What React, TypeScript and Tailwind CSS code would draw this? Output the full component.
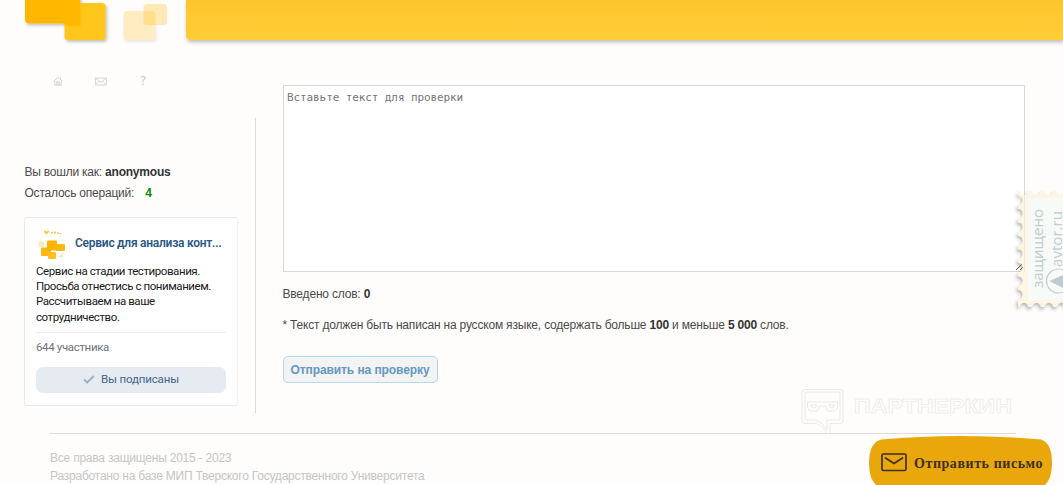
import React from 'react';

const sans = "font-['Liberation_Sans',Arial,sans-serif]";

function Logo() {
  return (
    <svg width="186" height="50" viewBox="0 0 186 50" className="block shrink-0">
      <defs>
        <filter id="soft" x="-20%" y="-20%" width="150%" height="150%">
          <feDropShadow dx="1.5" dy="2" stdDeviation="1.6" floodColor="#555" floodOpacity="0.35" />
        </filter>
        <filter id="faint" x="-20%" y="-20%" width="150%" height="150%">
          <feDropShadow dx="1" dy="2" stdDeviation="1.5" floodColor="#777" floodOpacity="0.15" />
        </filter>
        <filter id="edge" x="-20%" y="-20%" width="140%" height="140%">
          <feGaussianBlur stdDeviation=".8" />
        </filter>
      </defs>
      <rect x="25" y="-20" width="55" height="43.500" rx="4" fill="#ffb700" filter="url(#soft)" />
      <rect x="64.500" y="3" width="41" height="37" rx="3.5" fill="#ffc71f" filter="url(#soft)" />
      <rect x="66" y="4" width="14.500" height="22" fill="#ffb700" filter="url(#edge)" />
      <rect x="62" y="-5" width="18" height="28.500" rx="1.500" fill="#ffb700" />
      <rect x="123.500" y="11" width="32" height="29" rx="3.500" fill="#ffecc0" filter="url(#faint)" />
      <rect x="143.500" y="4" width="23.500" height="21" rx="3.500" fill="#ffe9b6" />
      <path d="M143.500 11H152a3.500 3.500 0 0 1 3.500 3.500V25H147a3.500 3.500 0 0 1-3.500-3.500Z" fill="#ffdf8c" />
    </svg>
  );
}

function NavIcons() {
  return (
    <div className="flex h-[12px] items-center pl-[53px]">
      <svg width="10" height="10" viewBox="0 0 10 10" fill="none" stroke="#d4d2d0" strokeWidth=".9">
        <path d="M.5 5.500 5 1l4.500 4.500M1.800 5V9.300h6.400V5M7.500 3V1M3.700 9V5.800h2.600V9M5 6v3" />
      </svg>
      <svg width="12" height="9" viewBox="0 0 12 9" fill="none" stroke="#dad8d6" strokeWidth="1" className="ml-[32px]">
        <path d="M.5 1h11v7H.5zM.8 1.200 6 5.200l5.200-4M.8 7.800 4.300 4M11.200 7.800 7.700 4" />
      </svg>
      <span className="-mt-[1px] ml-[33px] font-['DejaVu_Sans',sans-serif] text-[12px] leading-[12px] tracking-normal text-[#d0cecc]">?</span>
    </div>
  );
}

function GroupAvatar() {
  return (
    <svg width="30" height="30" viewBox="0 0 30 30" className="block shrink-0">
      <circle cx="16" cy="15" r="14" fill="#fffefa" />
      <path d="M7.500 2.500 9 1.500l1.500 1 1.500-1 1.500 1-3 3ZM15 3h2v1.500h-2zM18 2.500h2V4.500h-2zM21.500 3h1v2h-1zM23.500 4h2v1h-2z" fill="#fbc545" />
      <rect x="2.500" y="12.500" width="5.500" height="5.500" rx="1" fill="#fbe9c0" />
      <rect x="20" y="15" width="9" height="7" rx="1" fill="#fdb913" />
      <rect x="5" y="18.500" width="10" height="8.500" rx="1" fill="#fdb913" />
      <rect x="11" y="11.500" width="10" height="10" rx="1" fill="#ffb400" />
      <rect x="12" y="23" width="8" height="7" rx="1" fill="#ffc020" />
      <path d="m22 28 6-4-2 4Z" fill="#fbe3ad" />
    </svg>
  );
}

const leftHoles = [14, 27.500, 41, 54.500, 68, 81.500, 95, 108.500];
const rowHoles = [11, 23.500, 36, 48.500];

function Stamp() {
  return (
    <svg width="50" height="134" viewBox="0 0 50 134" className="absolute left-[1013px] top-[186px]">
      <defs>
        <filter id="stampShadow" x="-20%" y="-10%" width="140%" height="120%">
          <feDropShadow dx="-1.500" dy="2.500" stdDeviation="1.800" floodColor="#333" floodOpacity="0.32" />
        </filter>
        <mask id="perforation" maskUnits="userSpaceOnUse" x="0" y="0" width="70" height="134">
          <rect x="5" y="5" width="65" height="116" fill="#fff" />
          {leftHoles.map((y) => <circle key={y} cx="5" cy={y} r="4.800" fill="#000" />)}
          {rowHoles.map((x) => (
            <g key={x} fill="#000">
              <circle cx={x} cy="5" r="4.300" />
              <circle cx={x} cy="121" r="4.300" />
            </g>
          ))}
        </mask>
      </defs>
      <g filter="url(#stampShadow)">
        <g mask="url(#perforation)">
          <rect x="5" y="5" width="65" height="116" fill="#fdf6e4" />
        </g>
      </g>
      <path d="M11.500 10V85.500" stroke="#ece6dc" />
      <rect x="15" y="12" width="35" height="102" fill="#f8faf8" />
      <g className="font-['Open_Sans',sans-serif] tracking-normal" fill="#c0cccf">
        <text transform="translate(29.500 102) rotate(-90)" fontSize="15" textLength="79">защищено</text>
        <text transform="translate(49 81) rotate(-90)" fontSize="15" textLength="56">avtor.ru</text>
      </g>
      <circle cx="45.500" cy="95" r="12" fill="#f8faf8" stroke="#c3ced2" strokeWidth="1.200" />
      <path d="M36.500 95 51 88.500v14Z" fill="#bccbd3" />
    </svg>
  );
}

function Watermark() {
  return (
    <svg width="212" height="46" viewBox="0 0 212 46" className="absolute left-[801px] top-[388px] tracking-normal" fill="none" stroke="#e7e6e5" strokeWidth=".9">
      <path d="M4 1.500h35q3 0 3 3v28q0 3-3 3H29v10h-3Q22 38 15 35.500H4q-3 0-3-3v-28q0-3 3-3Z" />
      <path d="M5 4h33q1 0 1 1v26q0 1-1 1H26v10Q21 34 15 32H5q-1 0-1-1V5q0-1 1-1Z" />
      <path d="M6.500 14h30v4q0 5-4.500 5h-3q-4 0-4-5h-7q0 5-4 5h-3q-4.500 0-4.500-5Z" />
      <path d="M9.500 17h6q0 3-2.500 3t-3.500-3ZM27.500 17h6q0 3-2.500 3t-3.500-3Z" />
      <text x="53" y="24.800" textLength="158" lengthAdjust="spacingAndGlyphs" fontSize="21" fontWeight="700" strokeWidth=".6" className="font-['Liberation_Sans',sans-serif]">ПАРТНЕРКИН</text>
    </svg>
  );
}

function MailButton() {
  return (
    <button className="absolute left-[869px] top-[436px] h-[49px] w-[183px] overflow-hidden">
      <svg width="183" height="54" viewBox="0 0 183 54" className="absolute left-0 top-0">
        <path d="M12 3.500Q91-3.500 172 3.500Q183 7 183 27Q183 46 173 51Q91 58 10 51Q0 46 0 27Q0 7 12 3.500Z" fill="#eaa70c" />
      </svg>
      <span className="relative flex items-center pl-[12px] pt-[4px]">
        <svg width="26" height="19" viewBox="0 0 26 19" fill="none" stroke="#3b301c" strokeWidth="1.700" className="shrink-0">
          <rect x="1" y="1" width="24" height="16.500" rx="1.500" />
          <path d="m4.500 5 8.500 5.500L21.500 5" strokeLinecap="round" />
        </svg>
        <span className="ml-[7px] mt-[2px] whitespace-nowrap font-['Liberation_Serif',serif] text-[14px] font-bold tracking-[0.56px] text-[#3b301c]">Отправить письмо</span>
      </span>
    </button>
  );
}

function GroupCard() {
  return (
    <section className="ml-[24px] mt-[13px] h-[189px] w-[214px] rounded-[3px] border border-[#e9eaec] border-r-[#f3f3f3] bg-white px-[11px] pt-[11px] font-[Roboto,sans-serif]">
      <div className="flex items-center">
        <GroupAvatar />
        <h2 className="-mt-[2px] ml-[9px] whitespace-nowrap text-[12px] font-semibold leading-[16px] tracking-[-0.260px] text-[#2a5885]">Сервис для анализа конт...</h2>
      </div>
      <p className="mt-[5px] whitespace-nowrap text-[11.500px] leading-[15.200px] tracking-[-0.420px] text-[#1a1a1a]">
        Сервис на стадии тестирования.<br />Просьба отнестись с пониманием.<br />Рассчитываем на ваше<br />сотрудничество.
      </p>
      <div className="mt-[7px] border-t border-[#eceef0] pt-[7px] text-[11.500px] leading-[15px] tracking-[-0.350px] text-[#6f7379]">644 участника</div>
      <button className="mt-[12px] flex h-[26px] w-full items-center justify-center rounded-[7px] bg-[#e5ebf1] text-[11.500px] tracking-[-0.150px] text-[#45648e]">
        <svg width="12" height="9" viewBox="0 0 12 9" fill="none" stroke="#9aaec4" strokeWidth="1.800" className="mr-[6px]">
          <path d="m1 4.500 3.200 3L10.800 1" />
        </svg>
        Вы подписаны
      </button>
    </section>
  );
}

export default function App() {
  return (
    <div className={`relative flex h-[485px] w-[1063px] flex-col overflow-hidden bg-[#fefdfb] text-[12px] tracking-[-0.190px] text-[#4b4b4b] ${sans}`}>
      <header className="flex h-[50px] shrink-0">
        <Logo />
        <div className="h-[40px] flex-1 rounded-bl-[4px] bg-linear-to-b from-[#fdc52c] to-[#ffcd37] shadow-[1px_2px_4px_rgba(80,80,80,0.4)]" />
      </header>
      <div className="flex h-[383px] shrink-0">
        <aside className="w-[256px] shrink-0 pt-[25px]">
          <NavIcons />
          <div className="mt-[31px] h-[295px] border-r border-[#dddcdb] pt-[44px]">
            <p className="pl-[24.500px] leading-[21px] tracking-[-0.220px]">Вы вошли как: <b className="text-[#333]">anonymous</b></p>
            <p className="pl-[24.500px] leading-[21px] tracking-[-0.220px]">Осталось операций: <b className="ml-[8px] text-[#078a07]">4</b></p>
            <GroupCard />
          </div>
        </aside>
        <main className="pl-[26.500px] pt-[35px]">
          <textarea
            placeholder="Вставьте текст для проверки"
            className="block h-[187px] w-[742px] resize border border-[#d8d8d8] bg-white px-[3.500px] py-[4.500px] font-['DejaVu_Sans_Mono',monospace] text-[11px] leading-[13px] tracking-[-0.100px] placeholder:text-[#757575]"
          />
          <p className="mt-[14px] leading-[16px]">Введено слов: <b className="text-[#333]">0</b></p>
          <p className="mt-[15px] whitespace-nowrap leading-[16px]">* Текст должен быть написан на русском языке, содержать больше <b className="text-[#333]">100</b> и меньше <b className="text-[#333]">5 000</b> слов.</p>
          <button className="mt-[23px] h-[27px] w-[155px] whitespace-nowrap rounded-[5px] border border-[#b5d6ea] bg-[#f3f3f3] text-[12px] font-bold tracking-[-0.090px] text-[#6298c1]">Отправить на проверку</button>
        </main>
      </div>
      <footer className="ml-[50px] w-[966px] border-t border-[#dddcdb] pt-[15px] leading-[18px] tracking-[-0.220px] text-[#c5c5c5]">
        <p>Все права защищены 2015 - 2023</p>
        <p>Разработано на базе МИП Тверского Государственного Университета</p>
      </footer>
      <Watermark />
      <Stamp />
      <MailButton />
    </div>
  );
}
